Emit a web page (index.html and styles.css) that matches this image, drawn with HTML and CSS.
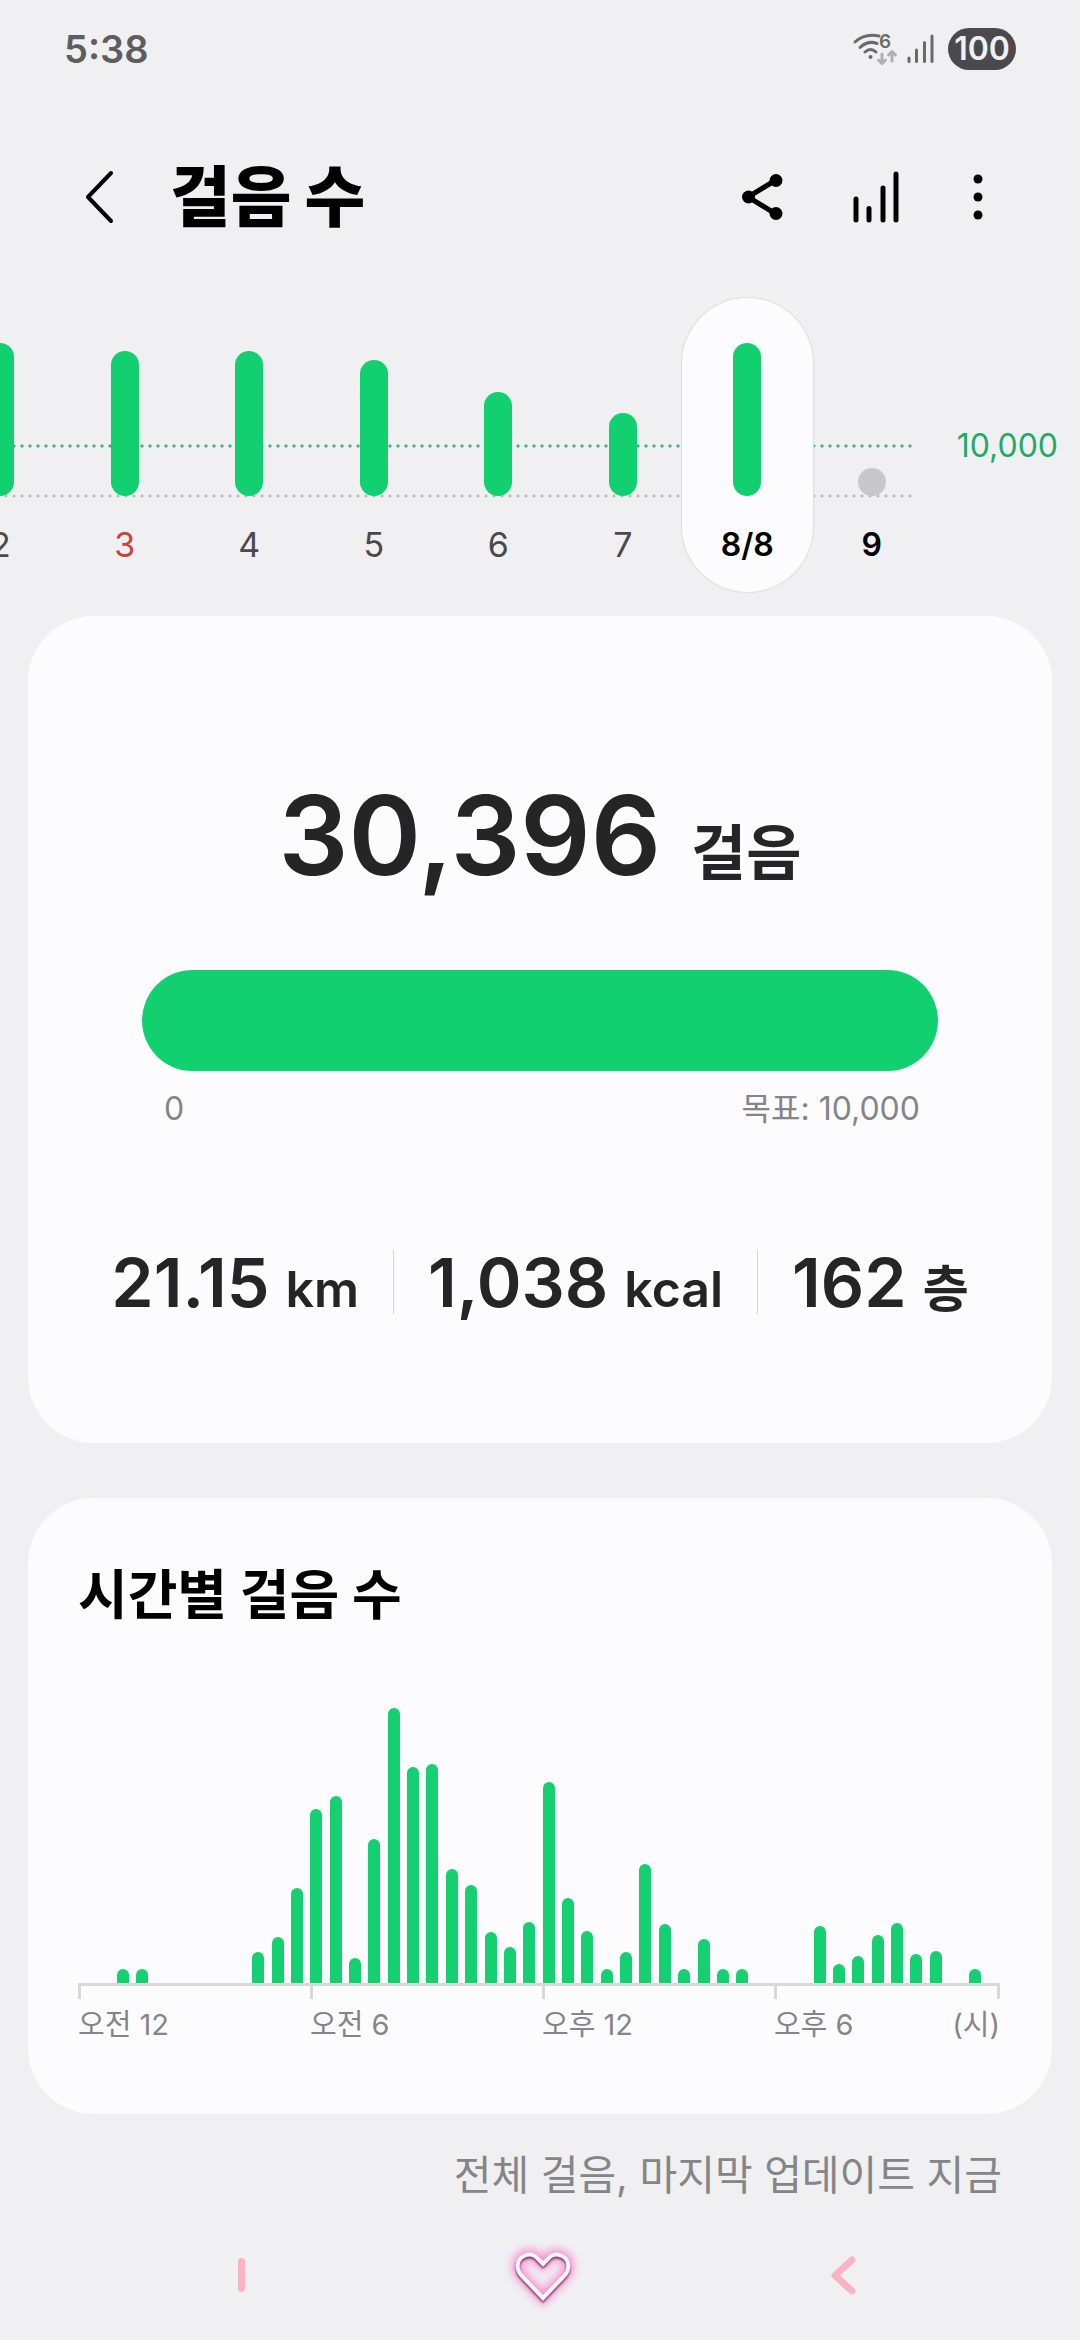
FILE: index.html
```html
<!DOCTYPE html>
<html lang="ko">
<head>
<meta charset="utf-8">
<meta name="viewport" content="width=device-width, initial-scale=1">
<title>걸음 수</title>
<link rel="stylesheet" href="styles.css">
</head>
<body>
<div class="status">
  <time class="clock">5:38</time>
  <div class="status-icons">
    <svg class="wifi" width="46" height="34" viewBox="0 0 46 34" fill="none" stroke-linecap="round" aria-label="Wi-Fi 6">
      <g stroke="#6a6a6c" stroke-width="3">
        <path d="M2 10Q12 1 26 4"/><path d="M7 15.500Q15 8 24 11.500"/><path d="M12 20Q17.500 15 23 20"/>
      </g>
      <circle cx="17.500" cy="25" r="2" fill="#6a6a6c"/>
      <text x="26" y="16" class="wifi-gen">6</text>
      <g stroke="#b0b0b2" stroke-width="3" stroke-linejoin="round">
        <path d="M29 22V31M25.500 28L29 31.500L32.500 28"/><path d="M39 29V20M35.500 23L39 19.500L42.500 23"/>
      </g>
    </svg>
    <svg class="signal" width="28" height="30" viewBox="0 0 28 30" stroke="#6a6a6c" stroke-width="3" stroke-linecap="round" aria-label="신호">
      <path d="M2 24V27.500M9.500 16V27.500M17.500 8.500V27.500M25 2V27.500"/>
    </svg>
    <span class="battery">100</span>
  </div>
</div>

<header class="top">
  <button class="icon-btn" aria-label="뒤로">
    <svg width="32" height="56" viewBox="0 0 32 56" fill="none" stroke="#000" stroke-width="4" stroke-linecap="round" stroke-linejoin="round"><path d="M27 4L4 28L27 52"/></svg>
  </button>
  <h1>걸음 수</h1>
  <div class="actions">
    <button class="icon-btn" aria-label="공유">
      <svg width="48" height="56" viewBox="0 0 48 56" stroke="#000" stroke-width="5"><path d="M38 11L10 28L38 45" fill="none"/><g stroke="none"><circle cx="10.500" cy="28" r="6.500"/><circle cx="38" cy="11.500" r="6.500"/><circle cx="38" cy="44.500" r="6.500"/></g></svg>
    </button>
    <button class="icon-btn" aria-label="통계">
      <svg width="48" height="56" viewBox="0 0 48 56" stroke="#000" stroke-width="5" stroke-linecap="round"><path d="M4 30V51M17 39.500V51M31 19V51M44 5V51"/></svg>
    </button>
    <button class="icon-btn" aria-label="더보기">
      <svg width="24" height="56" viewBox="0 0 24 56"><circle cx="12" cy="10" r="4.500"/><circle cx="12" cy="28" r="4.500"/><circle cx="12" cy="46" r="4.500"/></svg>
    </button>
  </div>
</header>

<section class="week" aria-label="일별 걸음 수">
  <div class="days">
    <button class="day"><span class="plot"><span class="bar" style="height:100%"></span></span><span class="date">2</span></button>
    <button class="day sunday"><span class="plot"><span class="bar" style="height:95%"></span></span><span class="date">3</span></button>
    <button class="day"><span class="plot"><span class="bar" style="height:95%"></span></span><span class="date">4</span></button>
    <button class="day"><span class="plot"><span class="bar" style="height:89%"></span></span><span class="date">5</span></button>
    <button class="day"><span class="plot"><span class="bar" style="height:68%"></span></span><span class="date">6</span></button>
    <button class="day"><span class="plot"><span class="bar" style="height:54%"></span></span><span class="date">7</span></button>
    <button class="day selected" aria-pressed="true"><span class="plot"><span class="bar" style="height:100%"></span></span><span class="date">8/8</span></button>
    <button class="day today"><span class="plot"><span class="bar empty"></span></span><span class="date">9</span></button>
  </div>
  <div class="goal">10,000</div>
</section>

<main>
  <section class="card summary">
    <p class="total"><span class="total-value">30,396</span><span class="total-unit">걸음</span></p>
    <div class="progress" role="progressbar" aria-label="목표 달성" aria-valuemin="0" aria-valuemax="10000" aria-valuenow="10000"><div class="progress-fill" style="width:100%"></div></div>
    <div class="range"><span>0</span><span>목표: 10,000</span></div>
    <div class="stats">
      <p class="stat"><span class="value">21.15</span><span class="unit">km</span></p>
      <p class="stat"><span class="value">1,038</span><span class="unit">kcal</span></p>
      <p class="stat"><span class="value">162</span><span class="unit">층</span></p>
    </div>
  </section>

  <section class="card hourly">
    <h2>시간별 걸음 수</h2>
    <div class="bars" role="img" aria-label="시간별 걸음 수 그래프">
      <i></i><i></i><i style="height:14px"></i><i style="height:14px"></i><i></i><i></i><i></i><i></i>
      <i></i><i style="height:31px"></i><i style="height:46px"></i><i style="height:95px"></i>
      <i style="height:174px"></i><i style="height:187px"></i><i style="height:25px"></i><i style="height:144px"></i>
      <i style="height:275px"></i><i style="height:216px"></i><i style="height:219px"></i><i style="height:114px"></i>
      <i style="height:98px"></i><i style="height:51px"></i><i style="height:36px"></i><i style="height:61px"></i>
      <i style="height:201px"></i><i style="height:85px"></i><i style="height:52px"></i><i style="height:14px"></i>
      <i style="height:31px"></i><i style="height:119px"></i><i style="height:59px"></i><i style="height:14px"></i>
      <i style="height:44px"></i><i style="height:14px"></i><i style="height:14px"></i><i></i>
      <i></i><i></i><i style="height:57px"></i><i style="height:19px"></i>
      <i style="height:27px"></i><i style="height:48px"></i><i style="height:60px"></i><i style="height:29px"></i>
      <i style="height:32px"></i><i></i><i style="height:14px"></i><i></i>
    </div>
    <div class="ticks"><span></span><span></span><span></span><span></span></div>
    <div class="hours"><span>오전 12</span><span>오전 6</span><span>오후 12</span><span>오후 6</span><span class="hour-unit">(시)</span></div>
  </section>

  <p class="updated">전체 걸음, 마지막 업데이트 지금</p>
</main>

<nav class="system-nav">
  <button class="icon-btn" aria-label="최근 앱">
    <svg width="72" height="80" viewBox="0 0 72 80" stroke="#f9b3c3" stroke-width="7" stroke-linecap="round"><path d="M34.500 26.500V53.500"/></svg>
  </button>
  <button class="icon-btn" aria-label="홈">
    <svg width="90" height="90" viewBox="0 0 90 90" fill="none" stroke-linejoin="miter">
      <defs>
        <filter id="glow" x="-50%" y="-50%" width="200%" height="200%"><feGaussianBlur stdDeviation="4"/></filter>
        <filter id="shade" x="-50%" y="-50%" width="200%" height="200%"><feGaussianBlur stdDeviation="1"/></filter>
        <path id="heart" d="M45 68L24 46C17 39 19 29 26 26C32 23 37 25 40 29L45 34L50 29C53 25 58 23 64 26C71 29 73 39 66 46Z"/>
      </defs>
      <use href="#heart" stroke="#fb8fd2" stroke-width="11" filter="url(#glow)"/>
      <use href="#heart" y="2" stroke="#6f3f60" stroke-width="4" filter="url(#shade)"/>
      <use href="#heart" stroke="#fff6fd" stroke-width="4"/>
    </svg>
  </button>
  <button class="icon-btn" aria-label="이전">
    <svg width="72" height="80" viewBox="0 0 72 80" fill="none" stroke="#f9b3c3" stroke-width="7" stroke-linecap="round" stroke-linejoin="round"><path d="M45 25L28 40.500L45 56"/></svg>
  </button>
</nav>
</body>
</html>
```

FILE: styles.css
```css
* {
  box-sizing: border-box;
}

body {
  margin: 0;
  background: #f0f0f2;
  color: #000;
  font-family: Inter, "Noto Sans CJK KR", sans-serif;
  overflow-x: hidden;
}

h1,
h2,
p {
  margin: 0;
}

button {
  padding: 0;
  border: 0;
  background: none;
  color: inherit;
  font: inherit;
}

svg {
  display: block;
  overflow: visible;
}

/* status bar */
.status {
  display: flex;
  align-items: center;
  justify-content: space-between;
  height: 98px;
  padding: 0 64px;
}

.clock {
  color: #5e5e60;
  font-size: 38px;
  font-weight: 600;
}

.status-icons {
  display: flex;
  align-items: center;
  gap: 8px;
}

.wifi-gen {
  fill: #6a6a6c;
  font-size: 19px;
  font-weight: 600;
}

.battery {
  min-width: 68px;
  margin-left: 5px;
  border-radius: 21px;
  background: #4a4a4c;
  color: #f0f0f2;
  font-size: 32px;
  font-weight: 600;
  line-height: 42px;
  text-align: center;
}

/* app bar */
.top {
  display: flex;
  align-items: center;
  height: 198px;
  padding: 0 90px 0 84px;
}

h1 {
  margin-left: 54px;
  font-size: 66px;
  font-weight: 900;
  line-height: 80px;
}

.actions {
  display: flex;
  gap: 66px;
  margin-left: auto;
}

/* day strip */
.week {
  display: grid;
  grid-template-columns: 1fr 146px;
  padding-top: 2px;
}

.days {
  display: grid;
  grid-template-columns: repeat(8, 1fr);
  position: relative;
  margin-left: -62px;
}

.days::before {
  content: "";
  position: absolute;
  top: 146px;
  right: 19px;
  left: 0;
  height: 54px;
  background:
    radial-gradient(circle, #2fae76 1px, transparent 2px) 0 0 / 8px 4px repeat-x,
    radial-gradient(circle, #bcbcbe 1px, transparent 2px) 0 100% / 8px 4px repeat-x;
}

.day {
  display: flex;
  flex-direction: column;
  align-items: center;
  position: relative;
  padding: 45px 0 27px;
  color: #4a4a4c;
  font-size: 34px;
  line-height: 40px;
}

.plot {
  display: flex;
  align-items: flex-end;
  height: 153px;
  margin-bottom: 29px;
}

.bar {
  width: 28px;
  border-radius: 14px;
  background: #12d06f;
}

.bar.empty {
  height: 28px;
  background: #c8c8ca;
}

.sunday {
  color: #c6453f;
}

.selected {
  margin: 0 -3px;
  border-radius: 66px;
  background: #fcfcfe;
  box-shadow: 0 0 1px 1px #dedee0;
}

.selected,
.today {
  color: #000;
  font-size: 32px;
  font-weight: 600;
}

.goal {
  padding: 128px 22px 0 0;
  color: #1faa68;
  font-size: 32px;
  line-height: 40px;
  text-align: right;
}

/* cards */
main {
  padding: 24px 28px 0;
}

.card {
  border-radius: 66px;
  background: #fcfcfe;
}

.summary {
  padding: 159px 0 129px;
  color: #252528;
}

.total {
  display: flex;
  align-items: baseline;
  justify-content: center;
  gap: 30px;
  font-weight: 600;
}

.total-value {
  font-size: 110px;
  line-height: 120px;
}

.total-unit {
  font-size: 60px;
  line-height: 60px;
}

.progress {
  height: 101px;
  margin: 75px 114px 18px;
  border-radius: 51px;
  background: #e4e4e6;
  overflow: hidden;
}

.progress-fill {
  height: 100%;
  background: #12d06f;
}

.range {
  display: flex;
  justify-content: space-between;
  margin: 0 132px 0 136px;
  color: #858587;
  font-size: 32px;
  line-height: 40px;
}

.stats {
  display: flex;
  justify-content: center;
  margin-top: 121px;
  font-weight: 600;
}

.stat {
  display: flex;
  align-items: baseline;
  gap: 16px;
  padding: 0 34px;
}

.stat + .stat {
  border-left: 1px solid #d4d4d6;
}

.value {
  font-size: 68px;
  line-height: 64px;
}

.unit {
  font-size: 50px;
  line-height: 40px;
}

/* hourly chart */
.hourly {
  margin-top: 55px;
  padding: 66px 52px 71px 50px;
}

h2 {
  font-size: 54px;
  font-weight: 700;
  line-height: 64px;
}

.bars {
  display: flex;
  align-items: flex-end;
  justify-content: space-between;
  height: 275px;
  margin-top: 80px;
}

.bars i {
  width: 12px;
  border-radius: 6px 6px 0 0;
  background: #15d070;
}

.ticks,
.hours {
  display: grid;
  grid-template-columns: repeat(3, 1fr) 223px;
}

.ticks {
  height: 16px;
  border: solid #d8d8da;
  border-width: 3px 3px 0 0;
}

.ticks span {
  border-left: 3px solid #d8d8da;
}

.hours {
  grid-template-columns: repeat(3, 1fr) 113px 113px;
  margin-top: 8px;
  color: #858587;
  font-size: 29px;
  line-height: 36px;
  white-space: nowrap;
}

.hour-unit {
  text-align: right;
}

.updated {
  margin-top: 36px;
  padding-right: 50px;
  color: #858587;
  font-size: 41px;
  line-height: 50px;
  text-align: right;
}

/* system navigation */
.system-nav {
  display: grid;
  grid-template-columns: repeat(3, 1fr);
  align-items: center;
  justify-items: center;
  height: 130px;
  margin-top: 10px;
  padding: 0 87px 0 93px;
}
```
